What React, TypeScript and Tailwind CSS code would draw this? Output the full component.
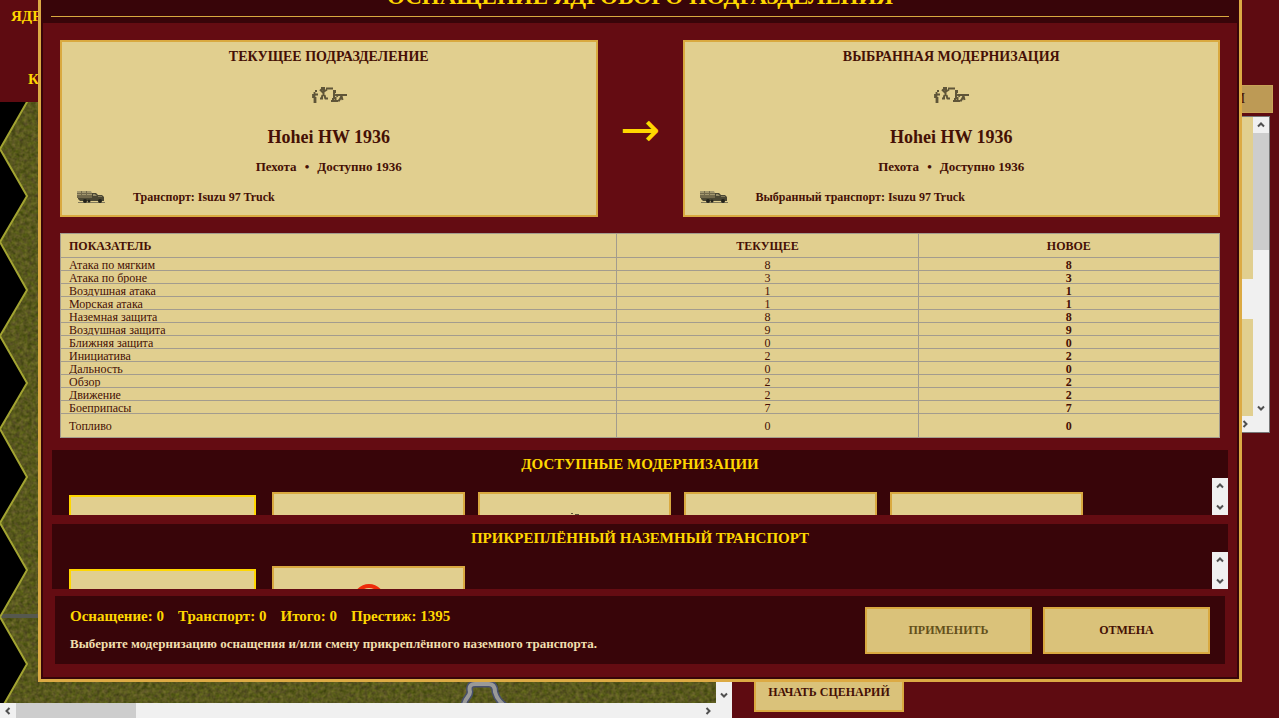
import React from 'react';

interface StatRow {
  label: string;
  current: number;
  next: number;
}

const stats: StatRow[] = [
  { label: 'Атака по мягким', current: 8, next: 8 },
  { label: 'Атака по броне', current: 3, next: 3 },
  { label: 'Воздушная атака', current: 1, next: 1 },
  { label: 'Морская атака', current: 1, next: 1 },
  { label: 'Наземная защита', current: 8, next: 8 },
  { label: 'Воздушная защита', current: 9, next: 9 },
  { label: 'Ближняя защита', current: 0, next: 0 },
  { label: 'Инициатива', current: 2, next: 2 },
  { label: 'Дальность', current: 0, next: 0 },
  { label: 'Обзор', current: 2, next: 2 },
  { label: 'Движение', current: 2, next: 2 },
  { label: 'Боеприпасы', current: 7, next: 7 },
  { label: 'Топливо', current: 0, next: 0 },
];

const totals = [
  { label: 'Оснащение', value: 0 },
  { label: 'Транспорт', value: 0 },
  { label: 'Итого', value: 0 },
  { label: 'Престиж', value: 1395 },
];

const chevronPaths = {
  up: 'M5 9.5 8 6.5 11 9.5',
  down: 'M5 6.5 8 9.5 11 6.5',
  left: 'M9.5 5 6.5 8 9.5 11',
  right: 'M6.5 5 9.5 8 6.5 11',
};

const ScrollButton: React.FC<{
  dir: keyof typeof chevronPaths;
  label: string;
}> = ({ dir, label }) => (
  <button
    type="button"
    aria-label={label}
    className="flex size-4 shrink-0 items-center justify-center bg-[#f0f0f0]"
  >
    <svg viewBox="0 0 16 16" className="size-4" fill="none">
      <path d={chevronPaths[dir]} stroke="#505050" strokeWidth="2" />
    </svg>
  </button>
);

const InfantryIcon = () => (
  <svg
    viewBox="0 0 36 18"
    className="h-[18px] w-9"
    fill="#5f5538"
    stroke="#5f5538"
  >
    <path d="M4 4h2v2H4z" stroke="none" />
    <path
      d="M3.5 6v6M3.5 11v6M4.5 11v6M2 8v4M4 8.5h3"
      strokeWidth="1.8"
      fill="none"
    />
    <path d="M10 1h4v3h-4z" stroke="none" />
    <path
      d="M12.5 4v6M11.5 9l-1 4M13.5 9l1 4M9 3.5l3 3M13 5.5l3-2M15 2.5h7M9 12.5h3M14 12.5h3"
      strokeWidth="2"
      fill="none"
    />
    <path d="M22 4h3v3h-3z" stroke="none" />
    <path
      d="M23 7v6M22 12v4M24.5 11v4M20 15h7M24 8.5l3 2M25 9h11M30.5 10l-2 4M30.5 10l1 4M27 14.5h2"
      strokeWidth="2"
      fill="none"
    />
  </svg>
);

const TruckIcon = () => (
  <svg viewBox="0 0 28 14" className="h-3.5 w-7">
    <path d="M0 1h14l1 2v5H0z" fill="#a3986f" />
    <path d="M0 3h15v1H0zM0 5h15v3H0zM4 1h1v6H4zM9 1h1v6H9z" fill="#736a4c" />
    <path d="M15 3h4l2 2h4l2 2v4H3L1 9V8h14z" fill="#4b4733" />
    <path d="M16 4h2l2 2h-4z" fill="#958c68" />
    <path d="M21 6h4v1h-4z" fill="#827a59" />
    <path d="M1 12h27v1H1z" fill="#81795a" />
    <circle cx="8" cy="11" r="2" fill="#23221a" />
    <circle cx="12" cy="11" r="1.5" fill="#23221a" />
    <circle cx="23" cy="11" r="2" fill="#23221a" />
  </svg>
);

const UnitCard: React.FC<{ title: string; transport: string }> = ({
  title,
  transport,
}) => (
  <section className="flex-1 border-2 border-[#d9a940] bg-[#e1cf8f] px-[15px] pt-1.5 pb-2.5 text-center font-bold text-[#451005]">
    <h2 className="text-sm leading-[18px]">{title}</h2>
    <div className="mt-5 flex justify-center">
      <InfantryIcon />
    </div>
    <h3 className="mt-[21px] text-lg leading-6">Hohei HW 1936</h3>
    <p className="mt-2 flex justify-center gap-2 text-[13px] leading-5">
      <span>Пехота</span>
      <span>•</span>
      <span>Доступно 1936</span>
    </p>
    <div className="mt-3 flex items-center gap-7 text-left text-xs leading-4">
      <TruckIcon />
      <span>{transport}</span>
    </div>
  </section>
);

const OptionStrip: React.FC<{
  title: string;
  children: React.ReactNode;
}> = ({ title, children }) => (
  <section className="mx-[9px] flex h-[65px] shrink-0 flex-col bg-[#380509]">
    <h2 className="h-7 shrink-0 pt-1 text-center text-[15px] leading-5 font-bold text-[#ffd700]">
      {title}
    </h2>
    <div className="flex min-h-0 flex-1">
      <div className="flex min-w-0 flex-1 gap-[13px] overflow-hidden pt-3.5 pl-3.5">
        {children}
      </div>
      <div className="flex flex-col justify-between bg-[#f0f0f0]">
        <ScrollButton dir="up" label="Прокрутить вверх" />
        <ScrollButton dir="down" label="Прокрутить вниз" />
      </div>
    </div>
  </section>
);

const OptionCard: React.FC<{
  label: string;
  selected?: boolean;
  children?: React.ReactNode;
}> = ({ label, selected, children }) => (
  <button
    type="button"
    aria-label={label}
    aria-pressed={!!selected}
    className={
      selected
        ? 'm-[3px] flex h-40 w-[187px] shrink-0 justify-center border-2 border-[#ffd700] bg-[#e1cf8f]'
        : 'flex h-40 w-[193px] shrink-0 justify-center border-2 border-[#d9a940] bg-[#e1cf8f]'
    }
  >
    {children}
  </button>
);

const HexMap = () => (
  <svg className="h-full w-full" aria-hidden="true">
    <defs>
      <filter
        id="grass"
        x="0"
        y="0"
        width="100%"
        height="100%"
        colorInterpolationFilters="sRGB"
      >
        <feTurbulence
          type="fractalNoise"
          baseFrequency="0.25"
          numOctaves="3"
          seed="4"
        />
        <feColorMatrix values="0.25 0.1 0 0 0.17  0.25 0 0 0 0.22  0.1 0.15 0 0 -0.01  0 0 0 0 1" />
      </filter>
    </defs>
    <rect width="100%" height="100%" fill="#565a1c" />
    <rect width="100%" height="100%" filter="url(#grass)" />
    <path d="M0 512h40v4H0z" fill="#56584e" />
    <path
      d="M464 604c0-8 6-9 6-14q-2-8 5-8h14q6 0 6 8 2 8 10 14"
      fill="none"
      stroke="#48506c"
      strokeWidth="7"
    />
    <path
      d="M464 604c0-8 6-9 6-14q-2-8 5-8h14q6 0 6 8 2 8 10 14"
      fill="none"
      stroke="#9a9a98"
      strokeWidth="4"
    />
    <path
      d="M27 0 0 47 27 94 0 140 27 188 0 234 27 281 0 327 27 375 0 421 27 468 0 515 27 562 -5 618H-20V-10H33z"
      fill="#000"
      stroke="#a3a432"
      strokeWidth="2"
    />
  </svg>
);

const Battlefield = () => (
  <div className="flex h-screen flex-col bg-[#5e0b11]">
    <header className="h-[102px] text-[15px] leading-5 font-bold text-[#ffd700]">
      <div className="pt-1.5 pl-[11px]">ЯДРОВЫЕ</div>
      <div className="pt-[43px] pl-7">КЛАСС</div>
    </header>
    <div className="flex min-h-0 flex-1">
      <div className="flex w-[732px] flex-col">
        <div className="flex min-h-0 flex-1">
          <div className="min-w-0 flex-1">
            <HexMap />
          </div>
          <div className="flex flex-col justify-end bg-[#f0f0f0]">
            <ScrollButton dir="down" label="Карта вниз" />
          </div>
        </div>
        <div className="flex h-[15px] items-center bg-[#f0f0f0]">
          <ScrollButton dir="left" label="Карта влево" />
          <div className="h-full w-[120px] bg-[#cdcdcd]" />
          <div className="flex-1" />
          <ScrollButton dir="right" label="Карта вправо" />
          <div className="w-4" />
        </div>
      </div>
      <aside className="flex min-w-0 flex-1 flex-col justify-between pb-1.5">
        <div className="-mt-[17px] pl-[22px]">
          <div className="mr-1.5 flex h-7 items-center justify-end border border-[#c9a257] bg-[#bd9a55] pr-[27px] text-sm text-[#451005]">
            АРМИИ
          </div>
          <div className="mt-[3px] mr-[9px] flex h-[317px] border border-[#777] bg-[#e1cf8f]">
            <div className="flex min-w-0 flex-1 flex-col">
              <div className="flex-1" />
              <div className="h-10 bg-[#f0f0f0]" />
              <div className="h-[97px]" />
              <div className="flex justify-end bg-[#f0f0f0]">
                <ScrollButton dir="right" label="Список вправо" />
              </div>
            </div>
            <div className="flex flex-col bg-[#f0f0f0] pb-4">
              <ScrollButton dir="up" label="Список вверх" />
              <div className="h-[117px] bg-[#cdcdcd]" />
              <div className="flex-1" />
              <ScrollButton dir="down" label="Список вниз" />
            </div>
          </div>
        </div>
        <button
          type="button"
          className="ml-[22px] h-10 w-[150px] border-2 border-[#d9a940] bg-[#dac27a] text-xs font-bold text-[#451005]"
        >
          НАЧАТЬ СЦЕНАРИЙ
        </button>
      </aside>
    </div>
  </div>
);

const EquipmentDialog = () => (
  <div
    role="dialog"
    aria-labelledby="dialog-title"
    className="absolute -top-8 right-[37px] bottom-9 left-[38px] flex flex-col border-3 border-[#dcaa44] bg-[#380509] p-0.5"
  >
    <header className="flex h-[50px] shrink-0 flex-col px-2">
      <h1
        id="dialog-title"
        className="flex-1 pt-2 text-center text-[23px] leading-8 font-bold text-[#ffd700]"
      >
        ОСНАЩЕНИЕ ЯДРОВОГО ПОДРАЗДЕЛЕНИЯ
      </h1>
      <div className="mb-1.5 h-px bg-[#d9a940]" />
    </header>

    <div className="flex min-h-0 flex-1 flex-col bg-[#640c12] pt-[17px]">
      <div className="flex items-stretch px-[17px]">
        <UnitCard
          title="ТЕКУЩЕЕ ПОДРАЗДЕЛЕНИЕ"
          transport="Транспорт: Isuzu 97 Truck"
        />
        <div className="flex w-[85px] items-center justify-center font-['DejaVu_Sans',sans-serif] text-5xl leading-10 text-[#ffd700]">
          →
        </div>
        <UnitCard
          title="ВЫБРАННАЯ МОДЕРНИЗАЦИЯ"
          transport="Выбранный транспорт: Isuzu 97 Truck"
        />
      </div>

      <div className="mt-4 mb-3 px-[17px]">
        <table className="w-full table-fixed border-collapse border border-[#a39c8e] bg-[#e1cf8f] text-xs text-[#451005]">
          <thead>
            <tr className="h-6 leading-4">
              <th className="w-[48%] border border-[#a39c8e] px-2 text-left">
                ПОКАЗАТЕЛЬ
              </th>
              <th className="w-[26%] border border-[#a39c8e]">ТЕКУЩЕЕ</th>
              <th className="w-[26%] border border-[#a39c8e]">НОВОЕ</th>
            </tr>
          </thead>
          <tbody className="leading-[14px]">
            {stats.map((row, i) => {
              const last = i === stats.length - 1;
              return (
                <tr key={row.label} className={last ? 'h-6' : 'h-[13px]'}>
                  <td className="border border-[#a39c8e] px-2">
                    <div className={last ? 'h-3.5' : 'h-3 overflow-hidden'}>
                      {row.label}
                    </div>
                  </td>
                  <td className="border border-[#a39c8e] text-center">
                    <div className={last ? 'h-3.5' : 'h-3'}>{row.current}</div>
                  </td>
                  <td className="border border-[#a39c8e] text-center font-bold">
                    <div className={last ? 'h-3.5' : 'h-3'}>{row.next}</div>
                  </td>
                </tr>
              );
            })}
          </tbody>
        </table>
      </div>

      <OptionStrip title="ДОСТУПНЫЕ МОДЕРНИЗАЦИИ">
        <OptionCard label="Hohei HW 1936" selected />
        <OptionCard label="Модернизация 2" />
        <OptionCard label="Модернизация 3">
          <svg viewBox="0 0 12 4" className="mt-[19px] h-1 w-3" fill="#5c5236">
            <path d="M2 0h2v1H2zM6 1h4v1H6z" />
          </svg>
        </OptionCard>
        <OptionCard label="Модернизация 4" />
        <OptionCard label="Модернизация 5" />
      </OptionStrip>
      <div className="h-[9px] shrink-0" />
      <OptionStrip title="ПРИКРЕПЛЁННЫЙ НАЗЕМНЫЙ ТРАНСПОРТ">
        <OptionCard label="Isuzu 97 Truck" selected />
        <OptionCard label="Без транспорта">
          <svg viewBox="0 0 32 32" className="mt-4 size-8" fill="none">
            <circle cx="16" cy="16" r="14" stroke="#ee2a0a" strokeWidth="4" />
            <path d="M6 6 26 26" stroke="#ee2a0a" strokeWidth="3" />
          </svg>
        </OptionCard>
      </OptionStrip>

      <footer className="mx-3 mt-[7px] flex h-[68px] shrink-0 items-center bg-[#380509] px-[15px] font-bold">
        <div className="flex-1">
          <p className="flex gap-3.5 text-[15px] leading-5 text-[#ffd700]">
            {totals.map((t) => (
              <span key={t.label}>
                {t.label}: {t.value}
              </span>
            ))}
          </p>
          <p className="mt-2 text-[13px] leading-5 text-[#f1dfae]">
            Выберите модернизацию оснащения и/или смену прикреплённого наземного
            транспорта.
          </p>
        </div>
        <div className="flex gap-[11px] text-xs">
          <button
            type="button"
            disabled
            className="h-[47px] w-[167px] border-2 border-[#d9a940] bg-[#dac27a] text-[#64501a]"
          >
            ПРИМЕНИТЬ
          </button>
          <button
            type="button"
            className="h-[47px] w-[167px] border-2 border-[#d9a940] bg-[#dac27a] text-[#451005]"
          >
            ОТМЕНА
          </button>
        </div>
      </footer>
    </div>
  </div>
);

const App: React.FC = () => {
  return (
    <main className="relative h-screen overflow-hidden font-['Liberation_Serif',serif]">
      <Battlefield />
      <EquipmentDialog />
    </main>
  );
};

export default App;
